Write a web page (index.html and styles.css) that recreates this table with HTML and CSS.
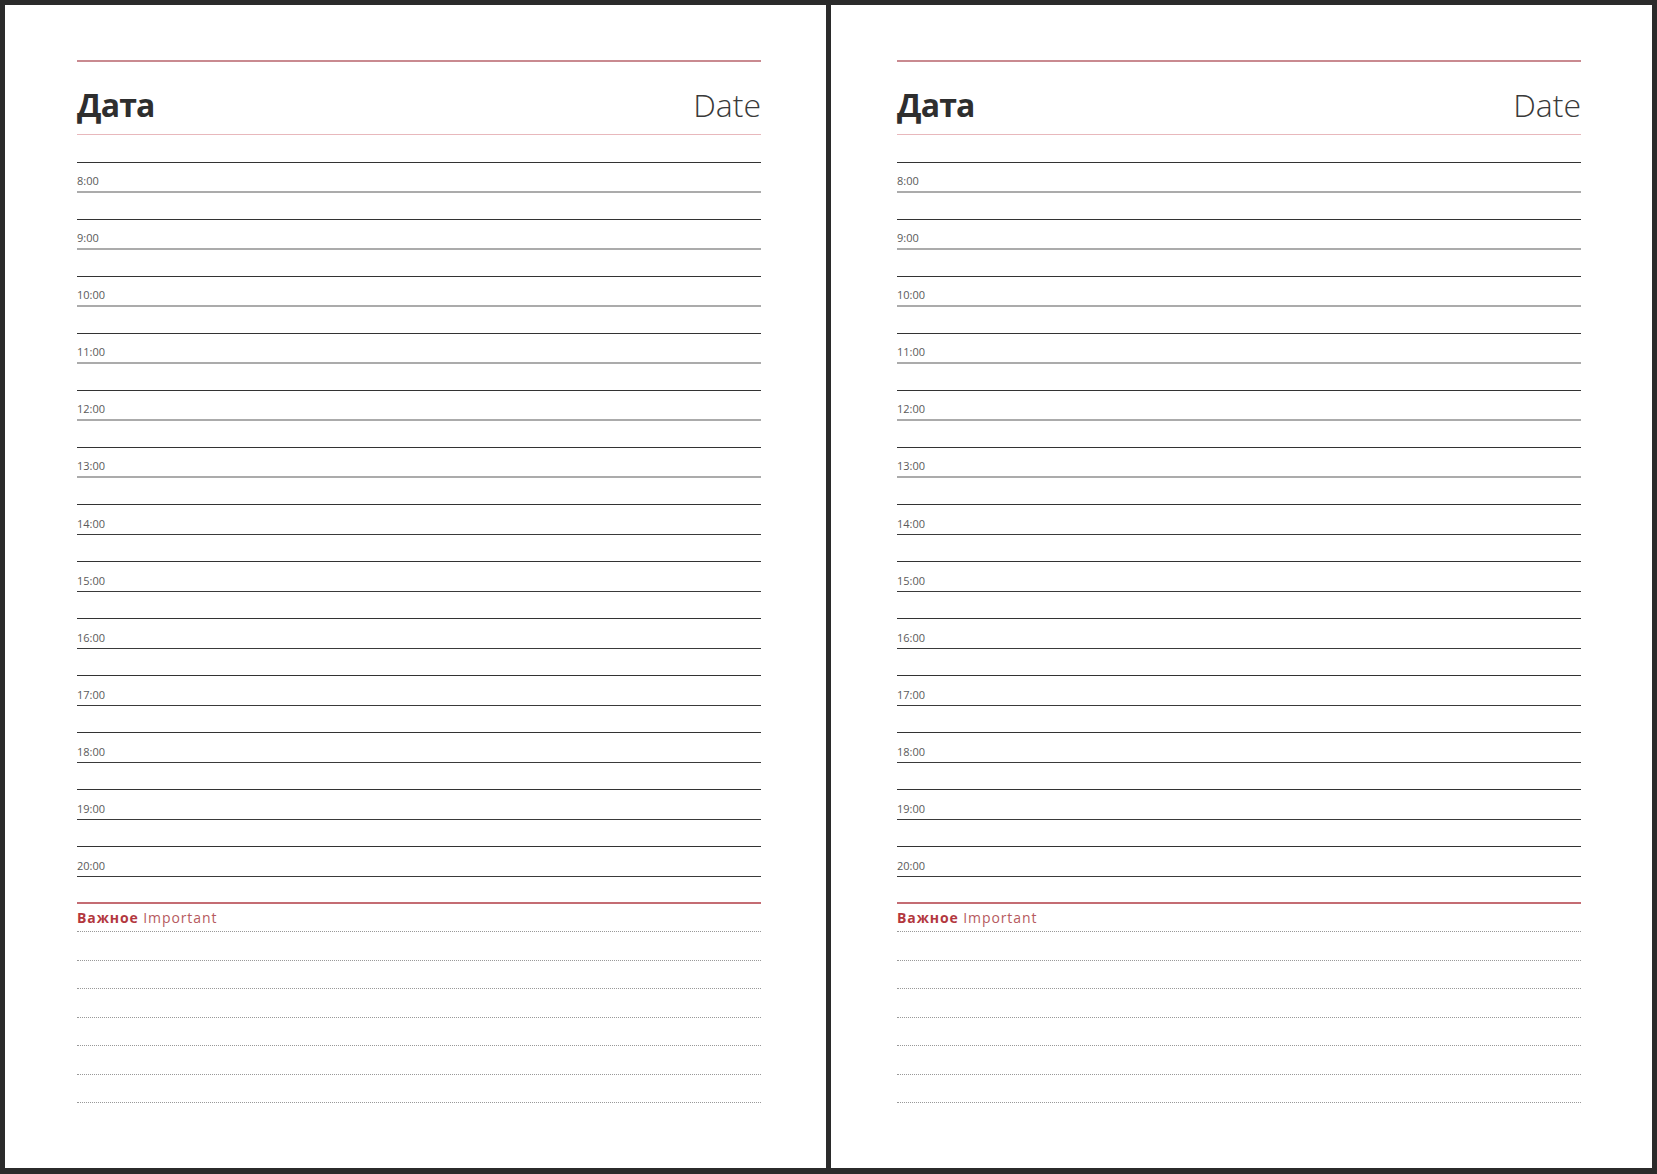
FILE: index.html
```html
<!DOCTYPE html>
<html lang="ru">
<head>
  <meta charset="UTF-8" />
  <meta name="viewport" content="width=device-width, initial-scale=1.0"/>
  <title>Ежедневник</title>
  <link rel="stylesheet" href="styles.css">
</head>
<body>
  <div class="book">
    <div class="page page--left">
      <div class="sheet">
        <div class="header">
          <span class="header__ru">Дата</span>
          <span class="header__en">Date</span>
        </div>
        <div class="hours">
          <div class="gap"></div><div class="slot">8:00</div>
          <div class="gap"></div><div class="slot">9:00</div>
          <div class="gap"></div><div class="slot">10:00</div>
          <div class="gap"></div><div class="slot">11:00</div>
          <div class="gap"></div><div class="slot">12:00</div>
          <div class="gap"></div><div class="slot">13:00</div>
          <div class="gap"></div><div class="slot slot--dark">14:00</div>
          <div class="gap"></div><div class="slot slot--dark">15:00</div>
          <div class="gap"></div><div class="slot slot--dark">16:00</div>
          <div class="gap"></div><div class="slot slot--dark">17:00</div>
          <div class="gap"></div><div class="slot slot--dark">18:00</div>
          <div class="gap"></div><div class="slot slot--dark">19:00</div>
          <div class="gap"></div><div class="slot slot--dark">20:00</div>
        </div>
        <div class="important">
          <div class="important__title"><b>Важное</b> Important</div>
          <div class="note"></div>
          <div class="note note--short"></div>
          <div class="note"></div>
          <div class="note note--short"></div>
          <div class="note"></div>
          <div class="note note--short"></div>
        </div>
      </div>
    </div>

    <div class="page page--right">
      <div class="sheet">
        <div class="header">
          <span class="header__ru">Дата</span>
          <span class="header__en">Date</span>
        </div>
        <div class="hours">
          <div class="gap"></div><div class="slot">8:00</div>
          <div class="gap"></div><div class="slot">9:00</div>
          <div class="gap"></div><div class="slot">10:00</div>
          <div class="gap"></div><div class="slot">11:00</div>
          <div class="gap"></div><div class="slot">12:00</div>
          <div class="gap"></div><div class="slot">13:00</div>
          <div class="gap"></div><div class="slot slot--dark">14:00</div>
          <div class="gap"></div><div class="slot slot--dark">15:00</div>
          <div class="gap"></div><div class="slot slot--dark">16:00</div>
          <div class="gap"></div><div class="slot slot--dark">17:00</div>
          <div class="gap"></div><div class="slot slot--dark">18:00</div>
          <div class="gap"></div><div class="slot slot--dark">19:00</div>
          <div class="gap"></div><div class="slot slot--dark">20:00</div>
        </div>
        <div class="important">
          <div class="important__title"><b>Важное</b> Important</div>
          <div class="note"></div>
          <div class="note note--short"></div>
          <div class="note"></div>
          <div class="note note--short"></div>
          <div class="note"></div>
          <div class="note note--short"></div>
        </div>
      </div>
    </div>
  </div>
</body>
</html>
```

FILE: styles.css
```css
* {
  box-sizing: border-box;
}
body {
  margin: 0;
  font-family: "Open Sans", "Noto Sans", sans-serif;
  background: #fff;
  color: #333;
}
.book {
  display: flex;
  gap: 5px;
  width: 1657px;
  height: 1174px;
  border: 5px solid #2b2b2b;
  border-bottom-width: 6px;
  background: #2b2b2b;
}
.page {
  width: 821px;
  padding-top: 55px;
  background: #fff;
}
.page--left {
  padding-left: 72px;
}
.page--right {
  padding-left: 66px;
}
.sheet {
  width: 684px;
  border-top: 2px solid #c98a90;
}
.header {
  display: flex;
  justify-content: space-between;
  align-items: flex-end;
  height: 73px;
  padding-bottom: 9px;
  border-bottom: 1px solid #e8b8bc;
}
.header__ru {
  font-size: 32px;
  line-height: 40px;
  font-weight: 700;
  color: #2e2e2e;
  letter-spacing: -0.8px;
}
.header__en {
  font-size: 32px;
  line-height: 40px;
  font-weight: 300;
  color: #3a3a3a;
}
.hours {
  padding-top: 1px;
}
.gap {
  height: 27px;
  border-bottom: 1px solid #333;
}
.slot {
  display: flex;
  align-items: flex-end;
  height: 30px;
  padding-bottom: 3px;
  font-size: 11px;
  line-height: 14px;
  color: #5a5a5a;
  border-bottom: 2px solid #ababab;
}
.slot--dark {
  border-bottom: 1px solid #3a3a3a;
}
.important {
  margin-top: 25px;
  border-top: 2px solid #c46c73;
}
.important__title {
  height: 28px;
  font-size: 14px;
  line-height: 27px;
  letter-spacing: 0.9px;
  color: #b65a60;
  border-bottom: 1px dotted #999;
}
.important__title b {
  font-weight: 700;
  color: #b3383e;
}
.note {
  height: 29px;
  border-bottom: 1px dotted #999;
}
.note--short {
  height: 28px;
}
```
